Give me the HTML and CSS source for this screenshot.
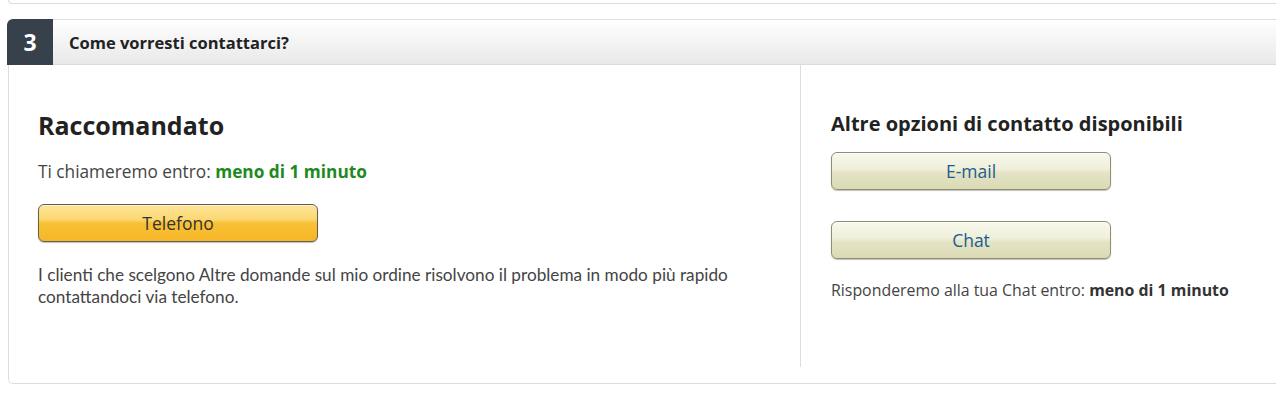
FILE: index.html
```html
<!DOCTYPE html>
<html lang="it">
<head>
<meta charset="utf-8">
<title>Come vorresti contattarci?</title>
<link rel="stylesheet" href="styles.css">
</head>
<body>
<div class="prev-box"></div>
<section class="step">
  <div class="step-head">
    <div class="step-num">3</div>
    <h2 class="step-title">Come vorresti contattarci?</h2>
  </div>
  <div class="step-body">
    <div class="col col-main">
      <h3 class="rec-title">Raccomandato</h3>
      <p class="wait">Ti chiameremo entro: <strong class="green">meno di 1 minuto</strong></p>
      <button class="btn btn-primary" type="button">Telefono</button>
      <p class="note">I clienti che scelgono Altre domande sul mio ordine risolvono il problema in modo più rapido<br>contattandoci via telefono.</p>
    </div>
    <div class="col col-side">
      <h3 class="side-title">Altre opzioni di contatto disponibili</h3>
      <button class="btn btn-alt" type="button">E-mail</button>
      <button class="btn btn-alt btn-chat" type="button">Chat</button>
      <p class="wait-side">Risponderemo alla tua Chat entro: <strong>meno di 1 minuto</strong></p>
    </div>
  </div>
</section>
</body>
</html>
```
FILE: styles.css
```css
html, body {
  margin: 0;
  padding: 0;
  background: #fff;
}
body {
  font-family: "Open Sans", sans-serif;
  color: #444;
  width: 1276px;
  height: 411px;
  overflow: hidden;
}
.prev-box {
  margin-left: 8px;
  width: 1290px;
  height: 3px;
  border-left: 1px solid #ddd;
  border-bottom: 1px solid #ddd;
  border-bottom-left-radius: 4px;
}
.step {
  margin-top: 15px;
}
.step-head {
  display: flex;
  height: 46px;
  margin-left: 7px;
  width: 1290px;
}
.step-num {
  width: 46px;
  flex: none;
  background: #37414b;
  border-top-left-radius: 6px;
  color: #fff;
  font-weight: 700;
  font-size: 23px;
  display: flex;
  align-items: center;
  justify-content: center;
}
.step-title {
  flex: 1;
  margin: 0;
  padding-left: 16px;
  border-top: 1px solid #ddd;
  border-bottom: 1px solid #dcdcdc;
  background: linear-gradient(#fff, #e9e9e9);
  font-size: 16.5px;
  font-weight: 700;
  color: #222;
  display: flex;
  align-items: center;
}
.step-body {
  margin-left: 8px;
  width: 1290px;
  height: 319px;
  border-left: 1px solid #ddd;
  border-bottom: 1px solid #ddd;
  border-bottom-left-radius: 5px;
  display: grid;
  grid-template-columns: 791px 1fr;
  padding-bottom: 16px;
  box-sizing: border-box;
}
.col-main {
  padding: 44px 0 0 29px;
}
.col-side {
  border-left: 1px solid #ddd;
  padding: 46px 0 0 30px;
}
.rec-title {
  margin: 0;
  font-size: 25px;
  font-weight: 700;
  color: #222;
  line-height: 32px;
}
.wait {
  margin: 20px 0 0;
  font-size: 17.25px;
  line-height: 22px;
  color: #444;
}
.green {
  color: #1e8a1e;
  font-weight: 700;
}
.btn {
  display: block;
  width: 280px;
  height: 38px;
  border-radius: 6px;
  font-family: "Open Sans", sans-serif;
  font-size: 17.5px;
  padding: 0;
  cursor: pointer;
}
.btn-primary {
  margin-top: 21px;
  border: 1px solid #625f52;
  background: linear-gradient(#fee49a, #fcd872 40%, #f8c136 50%, #f6b627);
  color: #333;
  box-shadow: inset 0 1px 0 rgba(255,255,255,0.5), 0 1px 1px rgba(0,0,0,0.25);
}
.note {
  margin: 22px 0 0;
  font-family: Lato, sans-serif;
  font-size: 17.2px;
  line-height: 22px;
  color: #444;
}
.side-title {
  margin: 0;
  font-size: 20px;
  font-weight: 700;
  color: #222;
  line-height: 26px;
}
.btn-alt {
  margin-top: 15px;
  border: 1px solid #8f8f6d;
  background: linear-gradient(#f8f8ed, #efefda 45%, #e4e4c5 55%, #dadab5);
  color: #205b8f;
  box-shadow: inset 0 1px 0 rgba(255,255,255,0.7), 0 1px 1px rgba(0,0,0,0.25);
}
.btn-chat {
  margin-top: 31px;
}
.wait-side {
  margin: 20px 0 0;
  font-size: 15.9px;
  line-height: 22px;
  color: #444;
}
.wait-side strong {
  color: #333;
}
```
